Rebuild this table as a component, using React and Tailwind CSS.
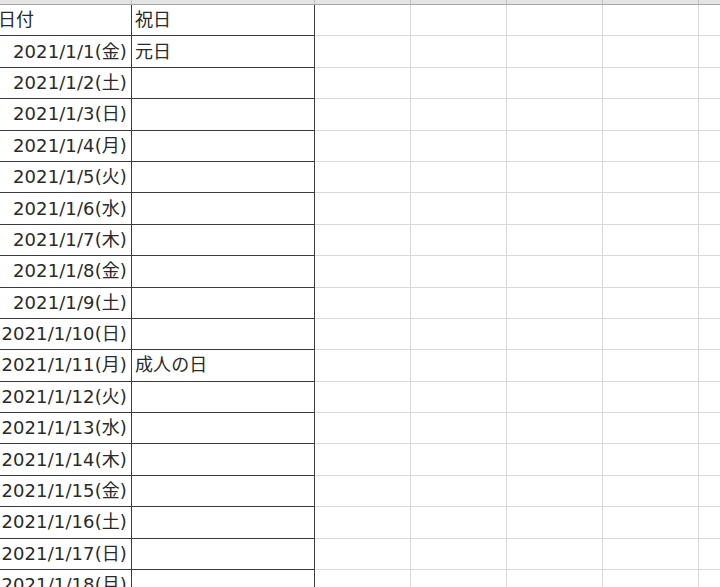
const days = ["金", "土", "日", "月", "火", "水", "木"];
const holidays = { 1: "元日", 11: "成人の日" };

const rows = Array.from({ length: 18 }, (_, i) => ({
  date: `2021/1/${i + 1}(${days[i % 7]})`,
  holiday: holidays[i + 1] || "",
}));

const font = { fontFamily: '"DejaVu Sans", "Noto Sans CJK JP", sans-serif' };

function Row({ a, b, header }) {
  return (
    <div className="flex h-[31.4px] shrink-0">
      <div className="w-[140px] shrink-0 border-b border-r border-[#3c3c3c] flex items-center">
        {header ? (
          <span className="pl-[6px]">{a}</span>
        ) : (
          <span className="w-full text-right pr-[4px] whitespace-nowrap">{a}</span>
        )}
      </div>
      <div className="w-[183px] shrink-0 border-b border-r border-[#3c3c3c] flex items-center pl-[3px]">
        {b}
      </div>
      {[0, 1, 2, 3].map((k) => (
        <div key={k} className="w-[96px] shrink-0 border-b border-r border-[#dadada]" />
      ))}
      <div className="w-[40px] shrink-0 border-b border-[#dadada]" />
    </div>
  );
}

export default function App() {
  return (
    <div className="w-[720px] h-[587px] overflow-hidden bg-white">
      <div className="ml-[-8px] text-[18px] tracking-[0.1px] text-[#2a2a2a] leading-none" style={font}>
        <div className="flex h-[5px] bg-[#e4e4e4] border-b border-[#a8a8a8]">
          <div className="w-[140px] shrink-0 border-r border-[#c4c4c4]" />
          <div className="w-[183px] shrink-0 border-r border-[#c4c4c4]" />
          {[0, 1, 2, 3].map((k) => (
            <div key={k} className="w-[96px] shrink-0 border-r border-[#c4c4c4]" />
          ))}
        </div>
        <Row a="日付" b="祝日" header />
        {rows.map((r) => (
          <Row key={r.date} a={r.date} b={r.holiday} />
        ))}
      </div>
    </div>
  );
}
